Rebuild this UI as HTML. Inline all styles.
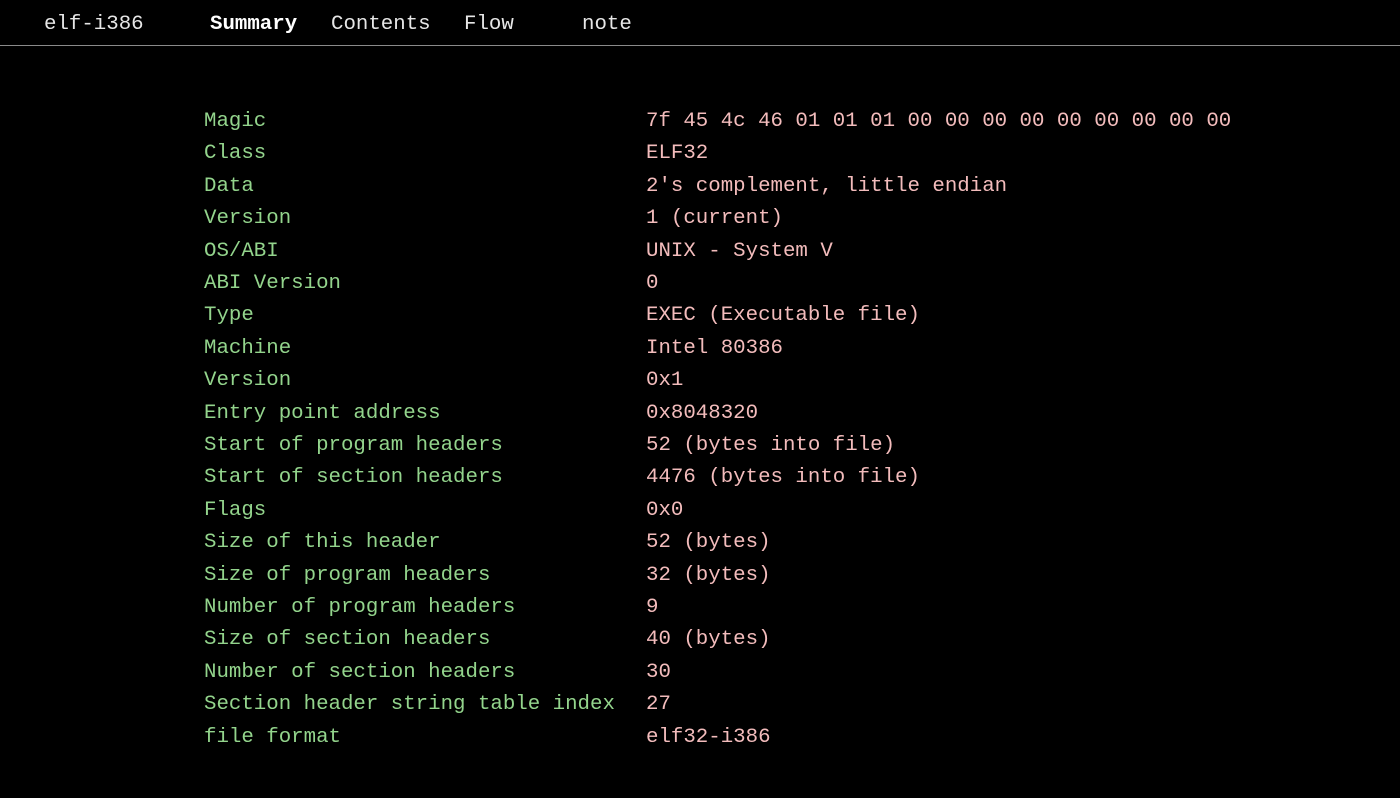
<!DOCTYPE html>
<html><head><meta charset="utf-8"><style>
html,body{margin:0;padding:0;background:#000;width:1400px;height:798px;overflow:hidden;font-family:"Liberation Mono",monospace;font-size:20.75px;}
.nav{position:absolute;top:0;left:0;width:1400px;height:45px;border-bottom:1px solid #8a8a8a;color:#e6e6e6;}
.nav span{position:absolute;top:12px;line-height:26px;white-space:pre;}
.row{position:absolute;left:0;height:32px;line-height:32px;white-space:pre;}
.k{position:absolute;left:204px;color:#93d48c;}
.v{position:absolute;left:646px;color:#f3bcbc;}
</style></head><body>
<div class="nav">
<span style="left:44px">elf-i386</span>
<span style="left:210px;font-weight:bold;color:#fff">Summary</span>
<span style="left:331px">Contents</span>
<span style="left:464px">Flow</span>
<span style="left:582px">note</span>
</div>
<div id="t"></div>
<script>
var d=[["Magic","7f 45 4c 46 01 01 01 00 00 00 00 00 00 00 00 00"],["Class","ELF32"],["Data","2's complement, little endian"],["Version","1 (current)"],["OS/ABI","UNIX - System V"],["ABI Version","0"],["Type","EXEC (Executable file)"],["Machine","Intel 80386"],["Version","0x1"],["Entry point address","0x8048320"],["Start of program headers","52 (bytes into file)"],["Start of section headers","4476 (bytes into file)"],["Flags","0x0"],["Size of this header","52 (bytes)"],["Size of program headers","32 (bytes)"],["Number of program headers","9"],["Size of section headers","40 (bytes)"],["Number of section headers","30"],["Section header string table index","27"],["file format","elf32-i386"]];
var h="";for(var i=0;i<d.length;i++){h+='<div class="row" style="top:'+(106+i*32.4)+'px"><span class="k">'+d[i][0]+'</span><span class="v">'+d[i][1]+'</span></div>';}
document.getElementById("t").innerHTML=h;
</script>
</body></html>
